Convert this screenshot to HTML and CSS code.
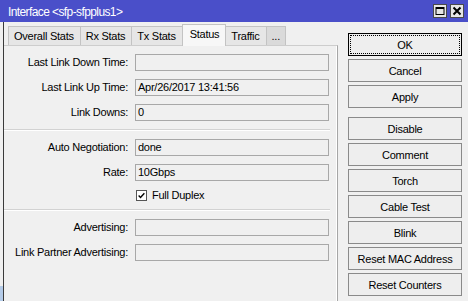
FILE: index.html
```html
<!DOCTYPE html>
<html>
<head>
<meta charset="utf-8">
<link rel="stylesheet" href="styles.css">
</head>
<body>
<div class="window">
  <div class="titlebar">
    <span class="title">Interface &lt;sfp-sfpplus1&gt;</span>
    <div class="wbtns">
      <span class="wbtn"><svg width="12" height="12" viewBox="0 0 12 12"><rect x="2" y="2.5" width="8" height="7" fill="none" stroke="#000" stroke-width="1"/><rect x="2" y="2" width="8" height="2" fill="#000"/></svg></span>
      <span class="wbtn"><svg width="12" height="12" viewBox="0 0 12 12"><path d="M2.5 2.5 L9.5 9.5 M9.5 2.5 L2.5 9.5" stroke="#000" stroke-width="2"/></svg></span>
    </div>
  </div>
  <div class="body">
    <div class="edge"></div>
    <div class="left">
      <div class="tabs">
        <span class="tab first">Overall Stats</span>
        <span class="tab">Rx Stats</span>
        <span class="tab">Tx Stats</span>
        <span class="tab active">Status</span>
        <span class="tab">Traffic</span>
        <span class="tab more">...</span>
      </div>
      <div class="panel">
        <div class="group">
          <div class="row"><span class="label">Last Link Down Time:</span><span class="field"></span></div>
          <div class="row"><span class="label">Last Link Up Time:</span><span class="field">Apr/26/2017 13:41:56</span></div>
          <div class="row"><span class="label">Link Downs:</span><span class="field">0</span></div>
        </div>
        <div class="sep"></div>
        <div class="group">
          <div class="row"><span class="label">Auto Negotiation:</span><span class="field">done</span></div>
          <div class="row"><span class="label">Rate:</span><span class="field">10Gbps</span></div>
          <div class="row check-row"><span class="label"></span><span class="check"><span class="box"><svg width="11" height="11" viewBox="0 0 11 11"><path d="M2 5.5 L4.3 7.8 L9 2.8" fill="none" stroke="#000" stroke-width="1.7"/></svg></span>Full Duplex</span></div>
        </div>
        <div class="sep"></div>
        <div class="group">
          <div class="row"><span class="label">Advertising:</span><span class="field"></span></div>
          <div class="row"><span class="label">Link Partner Advertising:</span><span class="field"></span></div>
        </div>
      </div>
    </div>
    <div class="buttons">
      <div class="btn default">OK</div>
      <div class="btn">Cancel</div>
      <div class="btn">Apply</div>
      <div class="btn spaced">Disable</div>
      <div class="btn">Comment</div>
      <div class="btn">Torch</div>
      <div class="btn">Cable Test</div>
      <div class="btn">Blink</div>
      <div class="btn">Reset MAC Address</div>
      <div class="btn">Reset Counters</div>
    </div>
  </div>
</div>
</body>
</html>
```
FILE: styles.css
```css
html, body {
  margin: 0;
  padding: 0;
}
body {
  background: #f0f0f0;
  font-family: "Liberation Sans", Arial, sans-serif;
  font-size: 11px;
  letter-spacing: -0.25px;
  color: #000;
  overflow: hidden;
}
.window {
  width: 468px;
  height: 301px;
  display: flex;
  flex-direction: column;
}
.titlebar {
  height: 22px;
  background: #4a4fc9;
  display: flex;
  align-items: flex-start;
  padding: 0 4px 0 8px;
  box-sizing: border-box;
}
.title {
  flex: 1;
  color: #fff;
  font-size: 12px;
  letter-spacing: -0.6px;
  line-height: 14px;
  margin-top: 5px;
}
.wbtns {
  display: flex;
  gap: 3px;
  margin-top: 4px;
}
.wbtn {
  width: 14px;
  height: 14px;
  box-sizing: border-box;
  border: 1px solid #4a4a4a;
  background: #e6e6e6;
  display: flex;
  align-items: center;
  justify-content: center;
}
.wbtn svg { display: block; }
.body {
  flex: 1;
  display: flex;
}
.edge {
  width: 3px;
  border-right: 1px solid #3a3a3a;
  background: linear-gradient(#f0f0f0 0, #f0f0f0 264px, #b4cbe8 264px);
}
.left {
  width: 334px;
  display: flex;
  flex-direction: column;
}
.tabs {
  height: 23px;
  display: flex;
  align-items: flex-end;
  padding-left: 4px;
}
.tab {
  height: 19px;
  box-sizing: border-box;
  padding: 0 6px 0 5px;
  line-height: 18px;
  border-top: 1px solid #c3c3c3;
  border-right: 1px solid #c3c3c3;
  background: #e6e6e6;
  white-space: nowrap;
}
.tab.first {
  border-left: 1px solid #c3c3c3;
}
.tab.active {
  height: 21px;
  line-height: 19px;
  background: #f7f7f7;
  padding: 0 6px 0 7px;
  margin-left: -1px;
  border-left: 1px solid #c3c3c3;
  margin-bottom: -1px;
  height: 22px;
  position: relative;
}
.tab.more {
  background: #dadada;
  padding: 0 5px 0 5px;
}
.panel {
  flex: 1;
  border-top: 1px solid #cdcdcd;
  border-right: 1px solid #a6a6a6;
  box-shadow: inset -1px 0 #ffffff;
  padding: 8px 7px 0 0;
}
.group {
  display: flex;
  flex-direction: column;
  gap: 8px;
}
.row {
  display: grid;
  grid-template-columns: 124px 194px;
  column-gap: 7px;
  height: 17px;
  align-items: center;
}
.label {
  text-align: right;
  line-height: 17px;
  white-space: nowrap;
}
.field {
  height: 17px;
  box-sizing: border-box;
  border: 1px solid #a8a8a8;
  background: #f0f0f0;
  padding-left: 2px;
  line-height: 15px;
  white-space: nowrap;
}
.check-row {
  height: 12px;
}
.check {
  display: flex;
  align-items: center;
  gap: 5px;
  margin-left: 1px;
  line-height: 12px;
}
.box {
  width: 11px;
  height: 11px;
  box-sizing: border-box;
  border: 1px solid #555;
  background: #fff;
  display: flex;
  align-items: center;
  justify-content: center;
}
.box svg { display: block; }
.sep {
  margin: 8px 0;
  border-top: 1px solid #d2d2d2;
  border-bottom: 1px solid #ffffff;
}
.buttons {
  width: 114px;
  margin-left: 10px;
  padding-top: 11px;
  display: flex;
  flex-direction: column;
  gap: 3px;
}
.btn {
  height: 23px;
  box-sizing: border-box;
  border: 1px solid #8a8a8a;
  background: #eeeeee;
  display: flex;
  align-items: center;
  justify-content: center;
  white-space: nowrap;
}
.btn.default {
  border-color: #000;
  outline: 1px dotted #000;
  outline-offset: -3px;
}
.btn.spaced {
  margin-top: 6px;
}
```
